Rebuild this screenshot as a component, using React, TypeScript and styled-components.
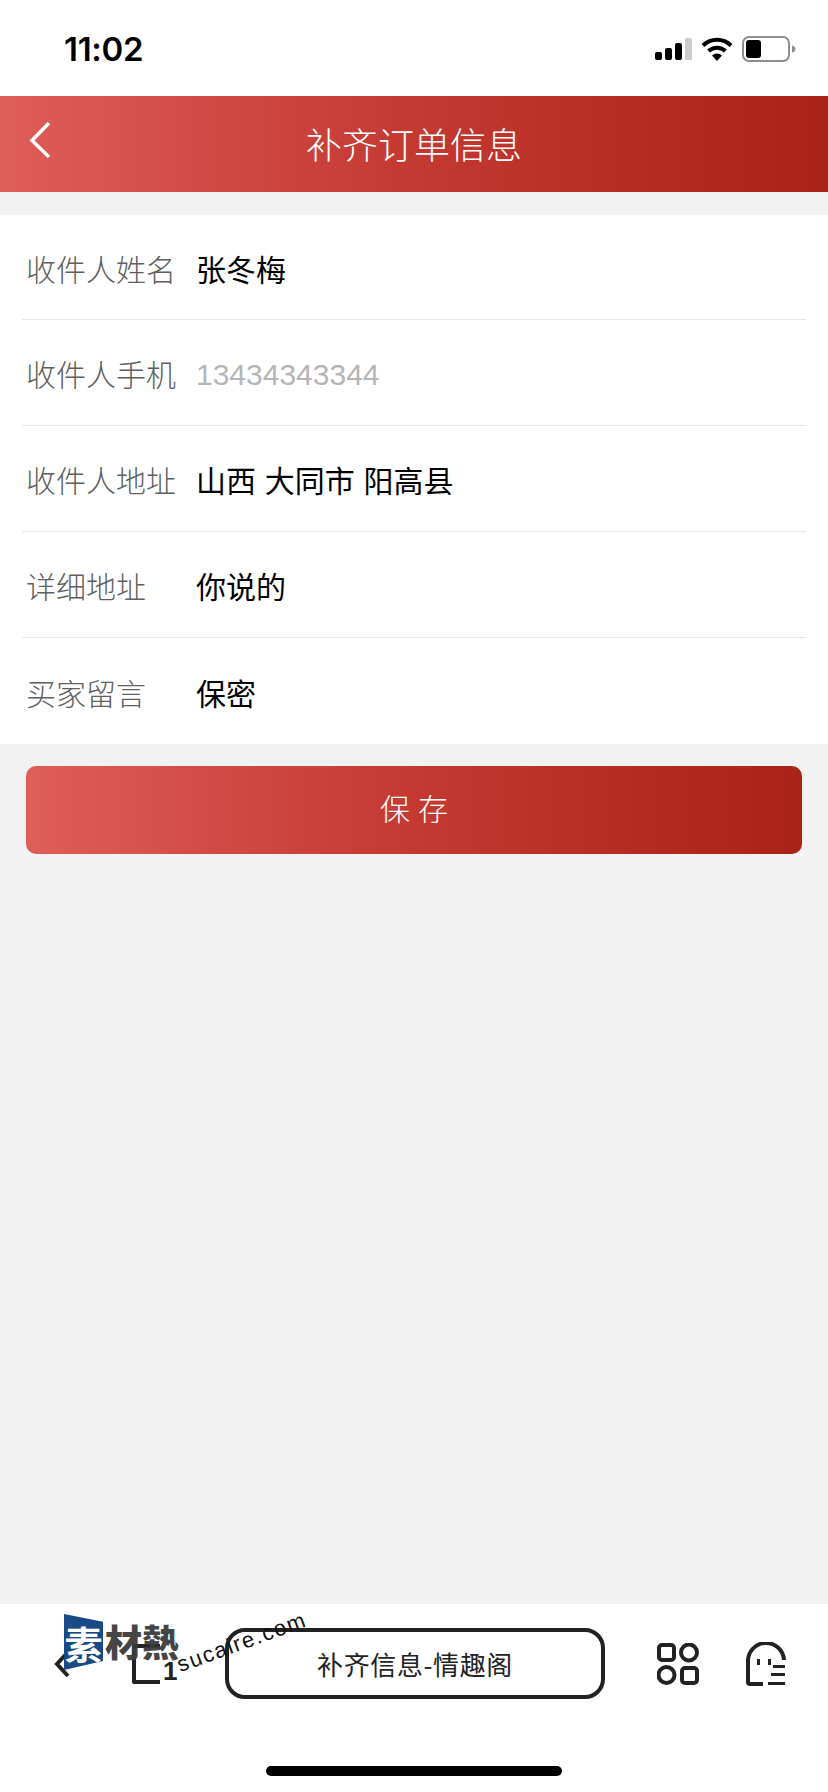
import styled, { createGlobalStyle } from 'styled-components';

const GlobalStyle = createGlobalStyle`
  html,
  body {
    margin: 0;
    padding: 0;
    background: #f2f2f2;
  }
  body {
    font-family: "Liberation Sans", "Noto Sans CJK SC", sans-serif;
  }
`;

const redGradient = 'linear-gradient(90deg, #de5e5a 0%, #c93f39 40%, #b2281d 85%, #aa2317 100%)';
const cjk = '"Noto Sans CJK SC", "Liberation Sans", sans-serif';

const rows = [
  { label: '收件人姓名', value: '张冬梅' },
  { label: '收件人手机', value: '13434343344', muted: true },
  { label: '收件人地址', value: '山西 大同市 阳高县' },
  { label: '详细地址', value: '你说的' },
  { label: '买家留言', value: '保密' },
];

const Page = styled.div`
  position: relative;
  display: flex;
  flex-direction: column;
  width: 828px;
  height: 1792px;
  overflow: hidden;
  background: #f2f2f2;
`;

const StatusBar = styled.div`
  display: flex;
  align-items: center;
  justify-content: space-between;
  height: 96px;
  padding: 2px 32px 0 64px;
  box-sizing: border-box;
  background: #fff;
`;

const Clock = styled.span`
  font-family: Inter, "Liberation Sans", sans-serif;
  font-size: 33px;
  font-weight: 600;
  letter-spacing: -0.3px;
  color: #000;
`;

const StatusIcons = styled.div`
  display: flex;
  align-items: center;
  gap: 9px;
`;

const Header = styled.header`
  position: relative;
  display: flex;
  align-items: center;
  justify-content: center;
  height: 96px;
  padding-bottom: 2px;
  box-sizing: border-box;
  background: ${redGradient};
`;

const BackButton = styled.svg`
  position: absolute;
  left: 27px;
  top: 24px;
`;

const Title = styled.h1`
  margin: 0;
  font-family: ${cjk};
  font-size: 36px;
  font-weight: 300;
  color: #fff;
`;

const Form = styled.section`
  margin-top: 23px;
  background: #fff;
`;

const Row = styled.div`
  display: flex;
  align-items: center;
  height: 106px;
  margin: 0 22px;
  padding-top: 1px;
  box-sizing: border-box;
  border-bottom: 1px solid #e8e8e8;

  &:first-child {
    height: 105px;
    padding-top: 2px;
  }

  &:last-child {
    border-bottom: 0;
  }
`;

const Label = styled.span`
  width: 170px;
  padding-left: 4px;
  font-family: ${cjk};
  font-size: 30px;
  font-weight: 300;
  color: #5f5f5f;
`;

const Value = styled.span`
  font-family: ${cjk};
  font-size: 30px;
  word-spacing: 2px;
  color: #000;
`;

const PhoneValue = styled.span`
  padding-top: 4px;
  font-family: "Liberation Sans", sans-serif;
  font-size: 30px;
  color: #b5b5b5;
`;

const SaveButton = styled.button`
  display: block;
  width: 776px;
  height: 88px;
  margin: 22px 26px 0;
  padding: 0 0 6px 8px;
  border: 0;
  border-radius: 10px;
  background: ${redGradient};
  font-family: ${cjk};
  font-size: 30px;
  font-weight: 300;
  letter-spacing: 8px;
  color: #fff;
`;

const Spacer = styled.div`
  flex: 1;
`;

const BottomBar = styled.footer`
  position: relative;
  display: flex;
  flex-direction: column;
  height: 188px;
  background: #fff;
`;

const Toolbar = styled.div`
  display: flex;
  align-items: center;
  height: 71px;
  margin-top: 24px;
  padding-left: 54px;
`;

const ToolIcon = styled.svg<{ $gap?: number }>`
  flex: none;
  margin-left: ${({ $gap }) => $gap ?? 0}px;
`;

const AddressPill = styled.div`
  flex: none;
  display: flex;
  align-items: center;
  justify-content: center;
  width: 380px;
  height: 71px;
  margin-left: 50px;
  box-sizing: border-box;
  border: 4px solid #222;
  border-radius: 20px;
  font-family: ${cjk};
  font-size: 26px;
  letter-spacing: 0.6px;
  color: #222;
`;

const TabCount = styled.span`
  flex: none;
  width: 12px;
  margin-left: 1px;
  align-self: flex-end;
  padding-bottom: 15px;
  font-family: "Liberation Sans", sans-serif;
  font-size: 26px;
  font-weight: 700;
  line-height: 1;
  color: #222;
`;

const HomeIndicator = styled.div`
  width: 296px;
  height: 10px;
  margin: 67px auto 0;
  border-radius: 5px;
  background: #000;
`;

const Watermark = styled.div`
  position: absolute;
  left: 64px;
  top: 10px;
  width: 270px;
  height: 70px;
`;

const Flag = styled.div`
  position: absolute;
  left: 0;
  top: 0;
  display: flex;
  align-items: center;
  justify-content: center;
  width: 39px;
  height: 56px;
  clip-path: polygon(0 0, 100% 14%, 100% 84%, 0 100%);
  background: #1a4a85;
  font-family: ${cjk};
  font-size: 38px;
  font-weight: 700;
  color: #fff;
`;

const MarkName = styled.span`
  position: absolute;
  left: 41px;
  top: 2px;
  font-family: ${cjk};
  font-size: 37px;
  line-height: 50px;
  font-weight: 900;
  color: #3c3c3c;
  opacity: 0.95;
`;

const MarkUrl = styled.span`
  position: absolute;
  left: 118px;
  top: 39px;
  transform: rotate(-20deg);
  transform-origin: left bottom;
  font-family: "Liberation Sans", sans-serif;
  font-size: 22px;
  line-height: 24px;
  letter-spacing: 1.6px;
  white-space: nowrap;
  color: #111;
`;

const SignalIcon = () => (
  <svg width="37" height="24" viewBox="0 0 37 24">
    <rect x="0" y="15" width="7" height="8" rx="2" fill="#000" />
    <rect x="10" y="11" width="7" height="12" rx="2" fill="#000" />
    <rect x="20" y="6" width="7" height="17" rx="2" fill="#000" />
    <rect x="30" y="1" width="7" height="22" rx="1.5" fill="#ccc" />
  </svg>
);

const WifiIcon = () => (
  <svg width="32" height="24" viewBox="0 0 32 24">
    <path d="M2 8.5a20 20 0 0 1 28 0" fill="none" stroke="#000" strokeWidth="4" />
    <path d="M7.5 14a12.5 12.5 0 0 1 17 0" fill="none" stroke="#000" strokeWidth="4" />
    <path d="M11 18.5a7 7 0 0 1 10 0L16 24z" fill="#000" />
  </svg>
);

const BatteryIcon = () => (
  <svg width="54" height="26" viewBox="0 0 54 26">
    <rect x="1" y="1" width="46" height="24" rx="6" fill="none" stroke="#8e8e8e" strokeWidth="2" />
    <rect x="4" y="4" width="15" height="18" rx="3" fill="#000" />
    <path d="M50 9.5c2.5 .6 3.5 2 3.5 3.5s-1 2.9-3.5 3.5z" fill="#8e8e8e" />
  </svg>
);

export default function App() {
  return (
    <Page>
      <GlobalStyle />
      <StatusBar>
        <Clock>11:02</Clock>
        <StatusIcons>
          <SignalIcon />
          <WifiIcon />
          <BatteryIcon />
        </StatusIcons>
      </StatusBar>

      <Header>
        <BackButton width="28" height="40" viewBox="0 0 28 40">
          <path d="M22 3 5 20.500 22 37" fill="none" stroke="#fff" strokeWidth="3.500" />
        </BackButton>
        <Title>补齐订单信息</Title>
      </Header>

      <Form>
        {rows.map(row => (
          <Row key={row.label}>
            <Label>{row.label}</Label>
            {row.muted ? <PhoneValue>{row.value}</PhoneValue> : <Value>{row.value}</Value>}
          </Row>
        ))}
      </Form>

      <SaveButton>保存</SaveButton>
      <Spacer />

      <BottomBar>
        <Toolbar>
          <ToolIcon width="16" height="32" viewBox="0 0 16 32">
            <path d="M14 4 3 16l11 12" fill="none" stroke="#222" strokeWidth="4" />
          </ToolIcon>
          <ToolIcon $gap={62} width="30" height="40" viewBox="0 0 30 40">
            <path d="M28 2H2v36h26" fill="none" stroke="#222" strokeWidth="4" strokeLinejoin="round" />
          </ToolIcon>
          <TabCount>1</TabCount>
          <AddressPill>补齐信息-情趣阁</AddressPill>
          <ToolIcon $gap={52} width="42" height="42" viewBox="0 0 42 42">
            <rect x="2" y="2" width="15" height="15" rx="3" fill="none" stroke="#222" strokeWidth="4" />
            <circle cx="32" cy="9.500" r="8" fill="none" stroke="#222" strokeWidth="4" />
            <circle cx="9.500" cy="32" r="8" fill="none" stroke="#222" strokeWidth="4" />
            <rect x="25" y="25" width="15" height="15" rx="3" fill="none" stroke="#222" strokeWidth="4" />
          </ToolIcon>
          <ToolIcon $gap={47} width="40" height="44" viewBox="0 0 40 44">
            <path
              d="M17 42H4a2 2 0 0 1-2-2V20a18 18 0 0 1 36-2"
              fill="none"
              stroke="#222"
              strokeWidth="4"
            />
            <path d="M11 17h3v6h-3zM22 17h3v6h-3z" fill="#222" />
            <path d="M27 23h12v3H27zM25 31h14v3H25zM22 40h17v3H22z" fill="#222" />
          </ToolIcon>
        </Toolbar>
        <HomeIndicator />

        <Watermark>
          <Flag>素</Flag>
          <MarkName>材熱</MarkName>
          <MarkUrl>sucaire.com</MarkUrl>
        </Watermark>
      </BottomBar>
    </Page>
  );
}
